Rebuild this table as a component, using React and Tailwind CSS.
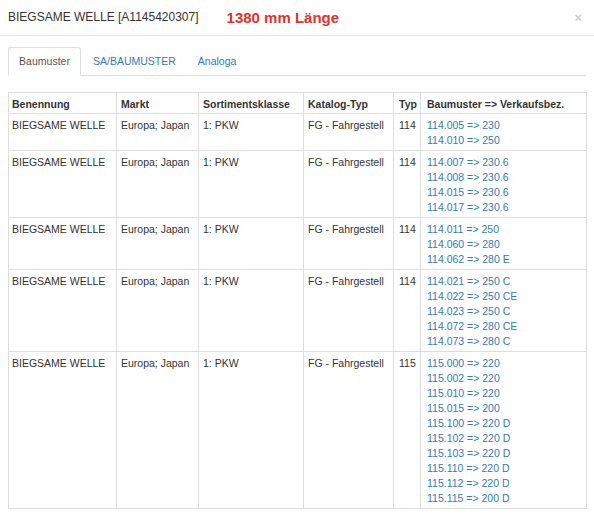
const rows = [
  { typ: "114", bm: ["114.005 => 230", "114.010 => 250"] },
  { typ: "114", bm: ["114.007 => 230.6", "114.008 => 230.6", "114.015 => 230.6", "114.017 => 230.6"] },
  { typ: "114", bm: ["114.011 => 250", "114.060 => 280", "114.062 => 280 E"] },
  { typ: "114", bm: ["114.021 => 250 C", "114.022 => 250 CE", "114.023 => 250 C", "114.072 => 280 CE", "114.073 => 280 C"] },
  {
    typ: "115",
    bm: [
      "115.000 => 220",
      "115.002 => 220",
      "115.010 => 220",
      "115.015 => 200",
      "115.100 => 220 D",
      "115.102 => 220 D",
      "115.103 => 220 D",
      "115.110 => 220 D",
      "115.112 => 220 D",
      "115.115 => 200 D",
    ],
  },
];

const cols = ["w-[108px]", "w-[82px]", "w-[105px]", "w-[90px]", "w-[27px]", "w-[166px]"];
const heads = [
  ["Benennung", "px-[3px]"],
  ["Markt", "px-[4px]"],
  ["Sortimentsklasse", "px-[4px]"],
  ["Katalog-Typ", "px-[4px]"],
  ["Typ", "px-[5px]"],
  ["Baumuster => Verkaufsbez.", "px-[6px]"],
];

export default function App() {
  return (
    <div className="min-h-[517px] bg-white text-[#333] font-['Liberation_Sans',Arial,sans-serif] text-[10.5px] leading-[15px]">
      <div className="flex h-[36px] items-center border-b border-[#e5e5e5] pl-2 pr-[12px]">
        <h4 className="text-[12px] text-[#333]">BIEGSAME WELLE [A1145420307]</h4>
        <span className="ml-[28px] text-[15px] font-bold text-[#e8302a]">1380 mm Länge</span>
        <button className="ml-auto text-[13px] font-bold leading-none text-[#ccc]">×</button>
      </div>

      <div className="px-2 pt-[11px]">
        <ul className="flex border-b border-[#ddd]">
          <li className="-mb-px flex h-[29px] w-[73px] items-center justify-center rounded-t-[3px] border border-[#ddd] border-b-white bg-white text-[#555]">
            Baumuster
          </li>
          <li className="flex h-[28px] items-center px-[12px] text-[#337ab7]">SA/BAUMUSTER</li>
          <li className="flex h-[28px] items-center px-[10px] text-[#337ab7]">Analoga</li>
        </ul>

        <table className="mt-[16px] w-[578px] table-fixed border-collapse border border-[#ddd]">
          <colgroup>
            {cols.map((c, i) => (
              <col key={i} className={c} />
            ))}
          </colgroup>
          <thead>
            <tr>
              {heads.map(([h, p]) => (
                <th key={h} className={`border border-[#ddd] ${p} pb-[1px] pt-[4px] text-left font-bold whitespace-nowrap`}>
                  {h}
                </th>
              ))}
            </tr>
          </thead>
          <tbody>
            {rows.map((r, i) => (
              <tr key={i} className="align-top">
                <td className="border border-[#ddd] px-[3px] pb-[2px] pt-[4px] whitespace-nowrap">BIEGSAME WELLE</td>
                <td className="border border-[#ddd] px-[4px] pb-[2px] pt-[4px] whitespace-nowrap">Europa; Japan</td>
                <td className="border border-[#ddd] px-[4px] pb-[2px] pt-[4px]">1: PKW</td>
                <td className="border border-[#ddd] px-[4px] pb-[2px] pt-[4px] whitespace-nowrap">FG - Fahrgestell</td>
                <td className="border border-[#ddd] px-[5px] pb-[2px] pt-[4px]">{r.typ}</td>
                <td className="border border-[#ddd] px-[6px] pb-[2px] pt-[4px]">
                  {r.bm.map((b) => (
                    <div key={b}>
                      <a className="text-[#337ab7]">{b}</a>
                    </div>
                  ))}
                </td>
              </tr>
            ))}
          </tbody>
        </table>
      </div>
    </div>
  );
}
